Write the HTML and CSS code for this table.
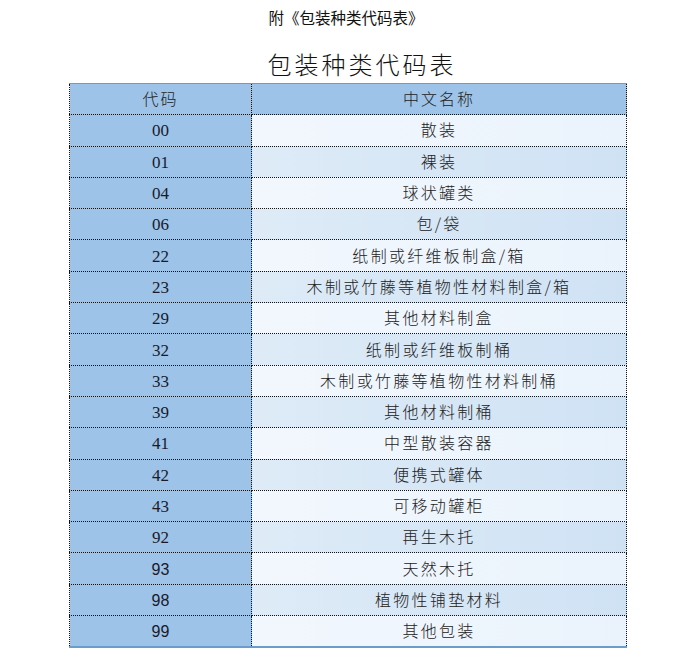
FILE: index.html
```html
<!DOCTYPE html>
<html lang="zh">
<head>
<meta charset="utf-8">
<link rel="stylesheet" href="styles.css">
</head>
<body>
<div class="page">
  <div class="note">附《包装种类代码表》</div>
  <h1 class="title">包装种类代码表</h1>
  <table class="codes">
    <thead>
      <tr><th class="c1">代码</th><th class="c2">中文名称</th></tr>
    </thead>
    <tbody>
      <tr><td class="c1"><span class="num">00</span></td><td class="c2">散装</td></tr>
      <tr><td class="c1"><span class="num">01</span></td><td class="c2">裸装</td></tr>
      <tr><td class="c1"><span class="num">04</span></td><td class="c2">球状罐类</td></tr>
      <tr><td class="c1"><span class="num">06</span></td><td class="c2">包/袋</td></tr>
      <tr><td class="c1"><span class="num">22</span></td><td class="c2">纸制或纤维板制盒/箱</td></tr>
      <tr><td class="c1"><span class="num">23</span></td><td class="c2">木制或竹藤等植物性材料制盒/箱</td></tr>
      <tr><td class="c1"><span class="num">29</span></td><td class="c2">其他材料制盒</td></tr>
      <tr><td class="c1"><span class="num">32</span></td><td class="c2">纸制或纤维板制桶</td></tr>
      <tr><td class="c1"><span class="num">33</span></td><td class="c2">木制或竹藤等植物性材料制桶</td></tr>
      <tr><td class="c1"><span class="num">39</span></td><td class="c2">其他材料制桶</td></tr>
      <tr><td class="c1"><span class="num">41</span></td><td class="c2">中型散装容器</td></tr>
      <tr><td class="c1"><span class="num">42</span></td><td class="c2">便携式罐体</td></tr>
      <tr><td class="c1"><span class="num">43</span></td><td class="c2">可移动罐柜</td></tr>
      <tr><td class="c1"><span class="num">92</span></td><td class="c2">再生木托</td></tr>
      <tr><td class="c1"><span class="num sans">93</span></td><td class="c2">天然木托</td></tr>
      <tr><td class="c1"><span class="num sans">98</span></td><td class="c2">植物性铺垫材料</td></tr>
      <tr><td class="c1"><span class="num sans">99</span></td><td class="c2">其他包装</td></tr>
    </tbody>
  </table>
</div>
</body>
</html>
```

FILE: styles.css
```css
html, body {
  margin: 0;
  padding: 0;
  background: #ffffff;
}
.page {
  width: 684px;
  padding-top: 7px;
  font-family: "Noto Sans CJK SC", "Liberation Sans", sans-serif;
  color: #1e1e1e;
}
.note {
  text-align: center;
  font-size: 15.5px;
  line-height: 20px;
  font-weight: 400;
  padding-left: 8px;
  color: #111;
}
.title {
  margin: 22px 0 0 0;
  text-align: center;
  font-size: 24px;
  line-height: 30px;
  font-weight: 300;
  letter-spacing: 3px;
  padding-left: 40px;
  color: #111;
}
.codes {
  margin: 4px 0 0 69px;
  width: 558px;
  border-collapse: collapse;
  table-layout: fixed;
  border-top: 1px solid #6b9ccb;
  border-bottom: 2px solid #6b9ccb;
  border-left: 1px dotted #111;
  border-right: 1px dotted #111;
}
.codes th, .codes td {
  height: 28.3px;
  padding: 0 0 2px 0;
  text-align: center;
  vertical-align: middle;
  font-size: 16px;
  font-weight: 300;
  color: #222;
  border-bottom: 1px dotted #111;
  border-right: 1px dotted #111;
}
.codes tbody tr:last-child td {
  border-bottom: none;
}
.codes th {
  background: #9dc3e8;
  font-weight: 300;
  letter-spacing: 2px;
}
.c1 {
  width: 181px;
}
.codes td.c1 {
  background: #9dc3e8;
}
.num {
  font-family: "Liberation Serif", "Times New Roman", serif;
  font-size: 17px;
  color: #1a1a2a;
}
.num.sans {
  font-family: "Liberation Sans", Arial, sans-serif;
  font-size: 16px;
}
.codes td.c2 {
  background: linear-gradient(90deg, #f2f7fd, #eaf3fc);
  letter-spacing: 2.3px;
}
.codes tbody tr:nth-child(even) td.c2 {
  background: linear-gradient(90deg, #deebf7, #cfe2f4);
}
```
